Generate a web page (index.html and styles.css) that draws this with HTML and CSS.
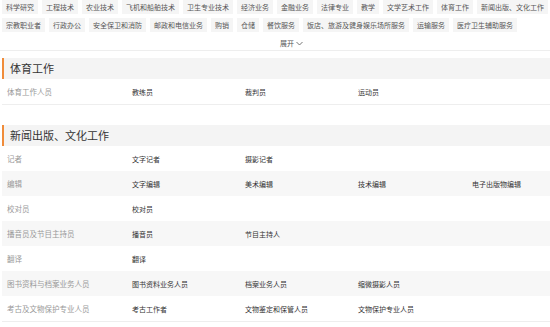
FILE: index.html
```html
<!DOCTYPE html>
<html lang="zh">
<head>
<meta charset="utf-8">
<title>职业分类</title>
<link rel="stylesheet" href="styles.css">
</head>
<body>
<div class="filter">
  <div class="tags">
    <span class="tag">科学研究</span>
    <span class="tag">工程技术</span>
    <span class="tag">农业技术</span>
    <span class="tag">飞机和船舶技术</span>
    <span class="tag">卫生专业技术</span>
    <span class="tag">经济业务</span>
    <span class="tag">金融业务</span>
    <span class="tag">法律专业</span>
    <span class="tag">教学</span>
    <span class="tag">文学艺术工作</span>
    <span class="tag">体育工作</span>
    <span class="tag">新闻出版、文化工作</span>
    <span class="tag">宗教职业者</span>
    <span class="tag">行政办公</span>
    <span class="tag">安全保卫和消防</span>
    <span class="tag">邮政和电信业务</span>
    <span class="tag">购销</span>
    <span class="tag">仓储</span>
    <span class="tag">餐饮服务</span>
    <span class="tag">饭店、旅游及健身娱乐场所服务</span>
    <span class="tag">运输服务</span>
    <span class="tag">医疗卫生辅助服务</span>
  </div>
  <div class="more">展开 <svg class="chev" width="7" height="5" viewBox="0 0 7 5"><path d="M0.5 1 L3.5 4 L6.5 1" fill="none" stroke="#666" stroke-width="0.9"/></svg></div>
</div>

<div class="section">
  <div class="section-head">体育工作</div>
  <div class="rows">
    <div class="row"><span class="label">体育工作人员</span><span class="val">教练员</span><span class="val">裁判员</span><span class="val">运动员</span><span class="val"></span></div>
  </div>
</div>

<div class="section">
  <div class="section-head">新闻出版、文化工作</div>
  <div class="rows">
    <div class="row"><span class="label">记者</span><span class="val">文字记者</span><span class="val">摄影记者</span><span class="val"></span><span class="val"></span></div>
    <div class="row"><span class="label">编辑</span><span class="val">文字编辑</span><span class="val">美术编辑</span><span class="val">技术编辑</span><span class="val">电子出版物编辑</span></div>
    <div class="row"><span class="label">校对员</span><span class="val">校对员</span><span class="val"></span><span class="val"></span><span class="val"></span></div>
    <div class="row"><span class="label">播音员及节目主持员</span><span class="val">播音员</span><span class="val">节目主持人</span><span class="val"></span><span class="val"></span></div>
    <div class="row"><span class="label">翻译</span><span class="val">翻译</span><span class="val"></span><span class="val"></span><span class="val"></span></div>
    <div class="row"><span class="label">图书资料与档案业务人员</span><span class="val">图书资料业务人员</span><span class="val">档案业务人员</span><span class="val">缩微摄影人员</span><span class="val"></span></div>
    <div class="row"><span class="label">考古及文物保护专业人员</span><span class="val">考古工作者</span><span class="val">文物鉴定和保管人员</span><span class="val">文物保护专业人员</span><span class="val"></span></div>
  </div>
</div>
</body>
</html>
```

FILE: styles.css
```css
* { box-sizing: border-box; }
body {
  margin: 0;
  background: #fff;
  font-family: "Noto Sans CJK SC", "Noto Sans", sans-serif;
  color: #333;
}
.filter {
  height: 51px;
  border-bottom: 1px solid #eeeeee;
}
.tags {
  display: flex;
  flex-wrap: wrap;
  gap: 4px 4px;
  padding: 0 2px;
}
.tag {
  height: 14px;
  line-height: 14px;
  padding: 0 4px;
  font-size: 7px;
  color: #555;
  background: #f5f5f5;
  white-space: nowrap;
}
.more {
  display: flex;
  align-items: center;
  gap: 2px;
  padding-left: 280px;
  margin-top: 4px;
  height: 14px;
  font-size: 7px;
  color: #555;
}
.chev { display: block; margin-top: 1px; }
.section {
  margin: 7px 0 20px 2px;
  border-bottom: 1px solid #eeeeee;
}
.section-head {
  height: 21px;
  line-height: 21px;
  background: #f4f4f4;
  border-left: 2px solid #f08c3a;
  padding-left: 6px;
  font-size: 11px;
  color: #333;
}
.row {
  display: grid;
  grid-template-columns: 130px 113px 113px 114px minmax(0, 1fr);
  height: 25px;
  align-items: center;
  background: #fff;
}
.rows .row:nth-child(even) { background: #f7f7f7; }
.label {
  padding-left: 5px;
  font-size: 7.5px;
  color: #999;
  white-space: nowrap;
}
.val {
  font-size: 7px;
  color: #333;
  white-space: nowrap;
}
```
